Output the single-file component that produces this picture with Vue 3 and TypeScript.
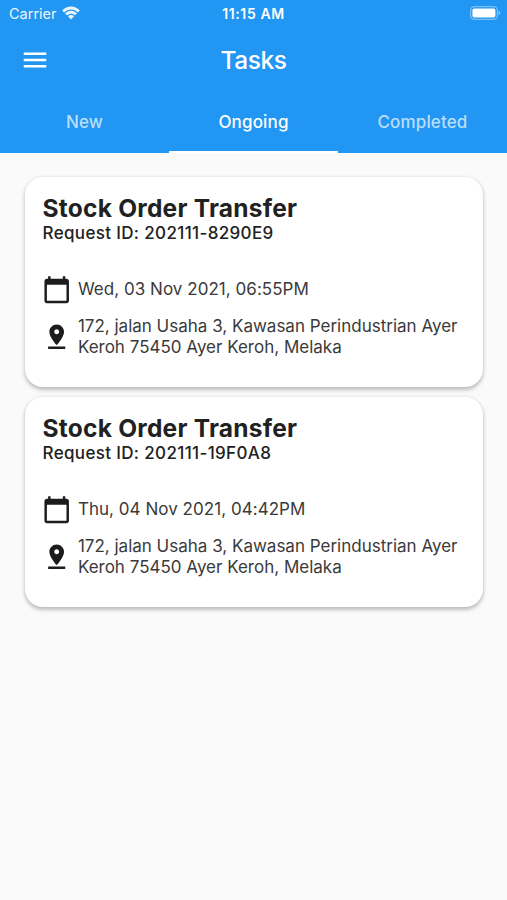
<script setup lang="ts">
interface Task {
  title: string
  requestId: string
  date: string
  address: string[]
}

const tabs: string[] = ['New', 'Ongoing', 'Completed']
const activeTab = 'Ongoing'

const address = ['172, jalan Usaha 3, Kawasan Perindustrian Ayer', 'Keroh 75450 Ayer Keroh, Melaka']
const tasks: Task[] = [
  { title: 'Stock Order Transfer', requestId: '202111-8290E9', date: 'Wed, 03 Nov 2021, 06:55PM', address },
  { title: 'Stock Order Transfer', requestId: '202111-19F0A8', date: 'Thu, 04 Nov 2021, 04:42PM', address },
]
</script>

<template>
  <div class="screen">
    <header class="header">
      <div class="status">
        <div class="carrier">
          <span class="carrier-name">Carrier</span>
          <svg class="wifi" viewBox="0 0 18 14">
            <path d="M0.2 4.5C5.2 -1 12.8 -1 17.8 4.5L15.9 6.4C12 2.4 6 2.4 2.1 6.4Z" />
            <path d="M3.1 7.4C6.5 4 11.5 4 14.9 7.4L13 9.3C10.7 7.2 7.3 7.2 5 9.3Z" />
            <path d="M6 10.3C7.8 8.7 10.2 8.7 12 10.3L9 13.4Z" />
          </svg>
        </div>
        <span class="clock">11:15 AM</span>
        <svg class="battery" viewBox="0 0 31 14">
          <rect x="0.6" y="0.6" width="26.8" height="12.8" rx="3.8" class="battery-shell" />
          <rect x="2.4" y="2.4" width="23" height="9.2" rx="2" class="battery-level" />
          <path d="M28.7 4.8C30.8 5.5 30.8 8.5 28.7 9.2Z" class="battery-cap" />
        </svg>
      </div>
      <div class="toolbar">
        <svg class="menu" viewBox="0 0 24 24"><path d="M3 18h18v-2H3v2zm0-5h18v-2H3v2zm0-7v2h18V6H3z" /></svg>
        <h1 class="heading">Tasks</h1>
      </div>
      <nav class="tabs">
        <div v-for="tab in tabs" :key="tab" class="tab" :class="{ active: tab === activeTab }">
          <span class="tab-label">{{ tab }}</span>
        </div>
      </nav>
    </header>
    <main class="list">
      <article v-for="task in tasks" :key="task.requestId" class="card">
        <h2 class="title">{{ task.title }}</h2>
        <p class="request">Request ID: {{ task.requestId }}</p>
        <div class="row date-row">
          <svg class="icon" viewBox="0 0 24 24">
            <path d="M20 3h-1V1h-2v2H7V1H5v2H4c-1.1 0-2 .9-2 2v16c0 1.1.9 2 2 2h16c1.1 0 2-.9 2-2V5c0-1.1-.9-2-2-2zm0 18H4V8h16v13z" />
          </svg>
          <span class="date">{{ task.date }}</span>
        </div>
        <div class="row address-row">
          <svg class="icon" viewBox="0 0 24 24">
            <path d="M18 8c0-3.31-2.69-6-6-6S6 4.69 6 8c0 4.5 6 11 6 11s6-6.5 6-11zm-8 0c0-1.1.9-2 2-2s2 .9 2 2-.89 2-2 2c-1.1 0-2-.9-2-2zM5 20v2h14v-2H5z" />
          </svg>
          <div class="address">
            <div v-for="line in task.address" :key="line">{{ line }}</div>
          </div>
        </div>
      </article>
    </main>
  </div>
</template>

<style>
body {
  margin: 0;
  background: #fafafa;
}
</style>

<style scoped>
.screen {
  height: 900px;
  background: #fafafa;
  font-family: Inter, 'Liberation Sans', sans-serif;
  color: #212121;
  overflow: hidden;
}

.header {
  display: flex;
  flex-direction: column;
  height: 152.5px;
  background: #2196f3;
  color: #fff;
}

.status {
  display: grid;
  grid-template-columns: 1fr auto 1fr;
  align-items: center;
  height: 27px;
  padding: 0 6px 0 9px;
  font-size: 14.5px;
}

.carrier {
  display: flex;
  align-items: center;
  gap: 5px;
  opacity: 0.92;
}

.wifi {
  width: 18px;
  height: 14px;
  margin-top: -1px;
  fill: #fff;
}

.clock {
  margin-right: 3px;
  font-weight: 600;
  font-size: 14px;
  letter-spacing: 0.6px;
}

.battery {
  justify-self: end;
  width: 31px;
  height: 14px;
  margin-top: -1px;
}

.battery-shell {
  fill: none;
  stroke: rgba(255, 255, 255, 0.4);
  stroke-width: 1.2;
}

.battery-level {
  fill: #fff;
}

.battery-cap {
  fill: rgba(255, 255, 255, 0.5);
}

.toolbar {
  display: grid;
  grid-template-columns: 1fr auto 1fr;
  align-items: center;
  height: 65px;
  padding: 0 20px;
}

.menu {
  width: 30px;
  height: 30px;
  fill: #fff;
}

.heading {
  margin: 0;
  font-size: 24.5px;
  font-weight: 500;
  letter-spacing: -0.4px;
}

.tabs {
  display: grid;
  grid-template-columns: repeat(3, 1fr);
  flex: 1;
}

.tab {
  display: flex;
  align-items: center;
  justify-content: center;
  padding-top: 1px;
  border-bottom: 2.5px solid transparent;
  font-size: 17px;
  font-weight: 500;
  letter-spacing: 0.15px;
  color: rgba(255, 255, 255, 0.7);
}

.tab.active {
  border-bottom-color: #fff;
  color: #fff;
}

.list {
  display: flex;
  flex-direction: column;
  gap: 10px;
  padding: 24.5px 24px 0 25px;
}

.card {
  box-sizing: border-box;
  height: 210px;
  padding: 16px 17.5px;
  border-radius: 18px;
  background: #fff;
  box-shadow: 0 2.5px 4px rgba(0, 0, 0, 0.2), 0 1px 4px rgba(0, 0, 0, 0.1);
}

.title {
  margin: 0;
  font-size: 24.5px;
  line-height: 30px;
  font-weight: 700;
  letter-spacing: 0.24px;
  white-space: nowrap;
}

.request {
  margin: 0;
  font-size: 17px;
  line-height: 20px;
  font-weight: 500;
  letter-spacing: 0.35px;
}

.row {
  display: flex;
  align-items: center;
  gap: 7px;
  margin-left: -1px;
  font-size: 17px;
  line-height: 21px;
  color: #3a3a3a;
  white-space: nowrap;
}

.date-row {
  margin-top: 32px;
}

.date {
  letter-spacing: 0.04px;
}

.address-row {
  margin-top: 11.5px;
}

.icon {
  flex: none;
  width: 29.4px;
  height: 29.4px;
  fill: #1c1c1c;
}

.address-row .icon {
  margin-top: -1px;
}
</style>
